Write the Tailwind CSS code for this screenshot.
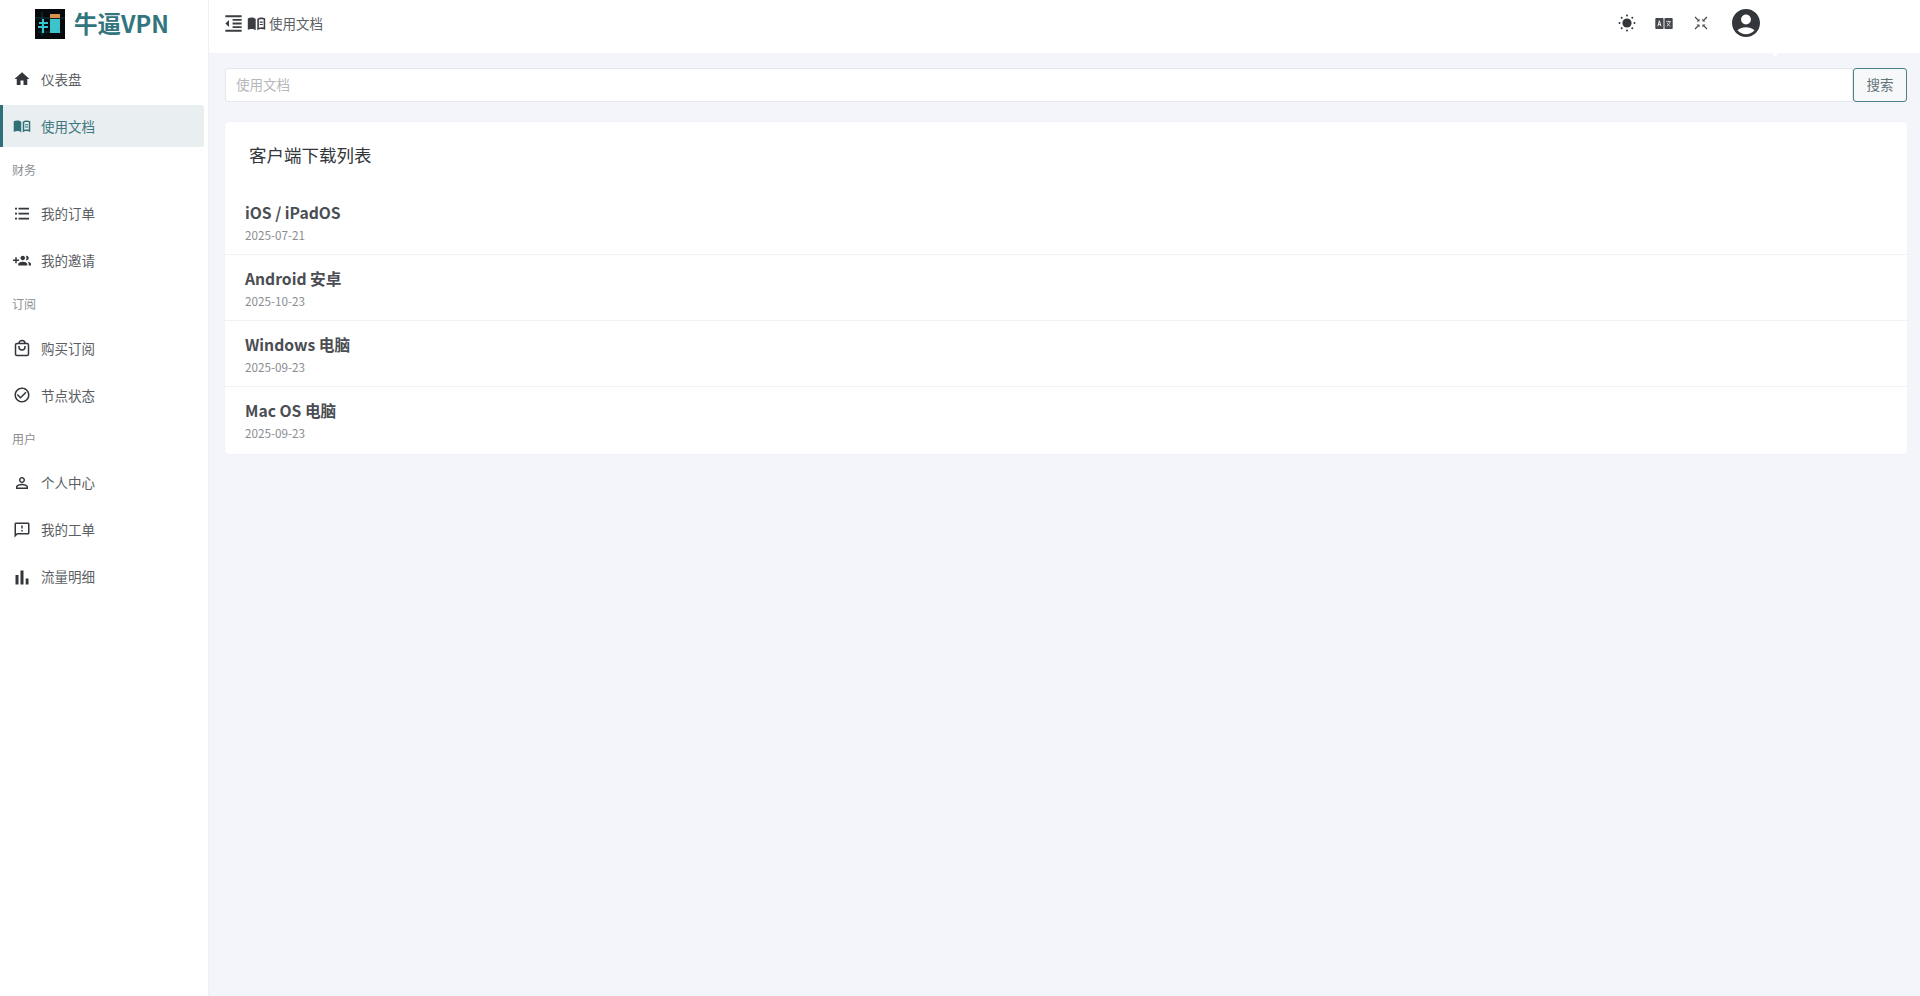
<!DOCTYPE html>
<html lang="zh-CN">
  <head>
    <meta charset="UTF-8" />
    <meta name="viewport" content="width=device-width, initial-scale=1.0" />
    <script src="https://cdn.jsdelivr.net/npm/@tailwindcss/browser@4"></script>
    <title>牛逼VPN</title>
  </head>
  <body class="bg-[#f4f5fa] font-['Noto_Sans_CJK_SC','Noto_Sans',sans-serif] text-[#3f4246]">
    <div class="flex h-[996px] overflow-hidden">
      <!-- sidebar -->
      <aside class="w-[209px] shrink-0 bg-white border-r border-[#eef0f5] flex flex-col">
        <div class="h-[47px] flex items-center pl-[35px] gap-[9px]">
          <svg class="w-[30px] h-[30px]" viewBox="0 0 30 30">
            <rect width="30" height="30" fill="#07090d" />
            <path d="M0 9h30M7 3v24M3 23h24" stroke="#155a66" stroke-width="0.6" />
            <rect x="15" y="10" width="10" height="14" fill="#3bc4cc" />
            <rect x="4" y="13" width="9" height="2" fill="#36c6d2" />
            <rect x="3" y="17" width="10" height="2" fill="#36c6d2" />
            <rect x="7" y="10" width="2" height="14" fill="#36c6d2" />
            <rect x="15" y="5" width="10" height="4" fill="#d98f4a" />
          </svg>
          <span class="text-[23.5px] leading-none font-bold text-[#33757f]">牛逼VPN</span>
        </div>
        <nav class="flex flex-col pt-[11px] text-[13.5px] text-[#5b5e63]">
          <a class="h-[42px] mb-[5px] flex items-center pl-[13px] mr-[4px]">
            <svg class="w-[18px] h-[18px] mr-[10px] fill-[#33363a]" viewBox="0 0 24 24"><path d="M10 20v-6h4v6h5v-8h3L12 3 2 12h3v8z" /></svg>
            仪表盘
          </a>
          <a class="h-[42px] flex items-center pl-[10px] mr-[4px] bg-[#e9eef0] border-l-[3px] border-[#2f6f78] rounded-r-[3px] text-[#3f7880]">
            <svg class="w-[18px] h-[18px] mr-[10px] fill-[#2f6f78]" viewBox="0 0 24 24"><path d="M11 6.200C9.600 5 7.600 4.500 5.500 4.500 3.900 4.500 2.400 4.900 1 5.800V20c1.400-.8 3-1.200 4.500-1.200 2 0 4 .5 5.500 1.700zM13 6.200c1.400-1.200 3.400-1.700 5.500-1.700 1.600 0 3.100.4 4.500 1.300V20c-1.400-.8-3-1.200-4.500-1.200-2 0-4 .5-5.500 1.700zm2 1v10.200c1-.5 2.300-.7 3.500-.7 1 0 1.900.1 2.500.3V7.100c-.8-.3-1.600-.5-2.500-.5-1.300 0-2.500.2-3.500.6zm1 2.300h4v1.500h-4zm0 3h4v1.500h-4z" /></svg>
            使用文档
          </a>
          <div class="h-[45.5px] flex items-center pl-[12px] text-[12px] text-[#8b8e92]">财务</div>
          <a class="h-[42px] mb-[5px] flex items-center pl-[13px] mr-[4px]">
            <svg class="w-[18px] h-[18px] mr-[10px] fill-[#33363a]" viewBox="0 0 18 18"><path d="M2 2.700h2v1.800H2zM2 7.700h2v1.800H2zM2 12.700h2v1.800H2zM5.500 2.700H16v1.800H5.500zM5.500 7.700H16v1.800H5.500zM5.500 12.700H16v1.800H5.500z" /></svg>
            我的订单
          </a>
          <a class="h-[42px] flex items-center pl-[13px] mr-[4px]">
            <svg class="w-[18px] h-[18px] mr-[10px] fill-[#33363a]" viewBox="0 0 24 24"><path d="M8 10H5V7H3v3H0v2h3v3h2v-3h3v-2zm10 1c1.660 0 2.990-1.340 2.990-3S19.660 5 18 5c-.32 0-.63.05-.91.14.57.81.9 1.790.9 2.860s-.34 2.040-.9 2.860c.28.09.59.14.91.14zm-5 0c1.660 0 2.990-1.340 2.990-3S14.660 5 13 5c-1.660 0-3 1.340-3 3s1.340 3 3 3zm6.620 2.160c.83.73 1.380 1.660 1.380 2.840v2h3v-2c0-1.540-2.370-2.490-4.380-2.840zM13 13c-2 0-6 1-6 3v2h12v-2c0-2-4-3-6-3z" /></svg>
            我的邀请
          </a>
          <div class="h-[45.5px] flex items-center pl-[12px] text-[12px] text-[#8b8e92]">订阅</div>
          <a class="h-[42px] mb-[5px] flex items-center pl-[13px] mr-[4px]">
            <svg class="w-[18px] h-[18px] mr-[10px] fill-none stroke-[#33363a] stroke-[1.500]" viewBox="0 0 18 18"><rect x="2.500" y="4.500" width="13" height="12" rx="1.500" /><path d="M6 4.500C6 2.700 7.300 1.500 9 1.500s3 1.200 3 3M6 7v1c0 1.700 1.300 3 3 3s3-1.300 3-3V7" /></svg>
            购买订阅
          </a>
          <a class="h-[42px] flex items-center pl-[13px] mr-[4px]">
            <svg class="w-[18px] h-[18px] mr-[10px] fill-[#33363a]" viewBox="0 0 24 24"><path d="M16.590 7.580L10 14.170l-3.590-3.580L5 12l5 5 8-8zM12 2C6.480 2 2 6.480 2 12s4.480 10 10 10 10-4.480 10-10S17.520 2 12 2zm0 18c-4.420 0-8-3.580-8-8s3.580-8 8-8 8 3.580 8 8-3.580 8-8 8z" /></svg>
            节点状态
          </a>
          <div class="h-[45.5px] flex items-center pl-[12px] text-[12px] text-[#8b8e92]">用户</div>
          <a class="h-[42px] mb-[5px] flex items-center pl-[13px] mr-[4px]">
            <svg class="w-[18px] h-[18px] mr-[10px] fill-[#33363a]" viewBox="0 0 24 24"><path d="M12 5.900c1.160 0 2.100.94 2.100 2.100s-.94 2.100-2.100 2.100S9.900 9.160 9.900 8s.94-2.100 2.100-2.100m0 9c2.970 0 6.100 1.460 6.100 2.100v1.100H5.900V17c0-.64 3.130-2.100 6.100-2.100M12 4C9.790 4 8 5.790 8 8s1.790 4 4 4 4-1.790 4-4-1.790-4-4-4zm0 9c-2.670 0-8 1.340-8 4v3h16v-3c0-2.660-5.330-4-8-4z" /></svg>
            个人中心
          </a>
          <a class="h-[42px] mb-[5px] flex items-center pl-[13px] mr-[4px]">
            <svg class="w-[18px] h-[18px] mr-[10px] fill-[#33363a]" viewBox="0 0 24 24"><path d="M20 2H4c-1.100 0-1.990.9-1.990 2L2 22l4-4h14c1.100 0 2-.9 2-2V4c0-1.100-.9-2-2-2zm0 14H5.170L4 17.170V4h16v12zm-9-4h2v2h-2zm0-6h2v4h-2z" /></svg>
            我的工单
          </a>
          <a class="h-[42px] flex items-center pl-[13px] mr-[4px]">
            <svg class="w-[18px] h-[18px] mr-[10px] fill-[#33363a]" viewBox="0 0 18 18"><path d="M2.500 7h3v9.500h-3zM7.500 2.500h3v14h-3zM12.700 10.500h2.800v6h-2.800z" /></svg>
            流量明细
          </a>
        </nav>
      </aside>

      <div class="flex-1 min-w-0 flex flex-col">
        <!-- top bar -->
        <header class="relative h-[53px] shrink-0 bg-white flex items-center pl-[15px] pr-[160px] pb-[7px]">
          <svg class="w-[19px] h-[19px] mr-[4px] fill-[#3a3d41]" viewBox="1.500 1.500 21 21"><path d="M11 17h10v-2H11v2zm-8-5l4 4V8l-4 4zm0 9h18v-2H3v2zM3 3v2h18V3H3zm8 6h10V7H11v2zm0 4h10v-2H11v2z" /></svg>
          <svg class="w-[19px] h-[19px] mr-[3px] fill-[#3a3d41]" viewBox="0 0 24 24"><path d="M11 6.200C9.600 5 7.600 4.500 5.500 4.500 3.900 4.500 2.400 4.900 1 5.800V20c1.400-.8 3-1.200 4.500-1.200 2 0 4 .5 5.500 1.700zM13 6.200c1.400-1.200 3.400-1.700 5.500-1.700 1.600 0 3.100.4 4.500 1.300V20c-1.400-.8-3-1.200-4.500-1.200-2 0-4 .5-5.500 1.700zm2 1v10.200c1-.5 2.300-.7 3.500-.7 1 0 1.900.1 2.500.3V7.100c-.8-.3-1.600-.5-2.500-.5-1.300 0-2.500.2-3.500.6zm1 2.300h4v1.500h-4zm0 3h4v1.500h-4z" /></svg>
          <span class="text-[13.5px] text-[#5b5e63]">使用文档</span>
          <div class="ml-auto flex items-center">
            <svg class="w-[20px] h-[20px] mr-[18px] fill-[#33363a]" viewBox="0 0 20 20">
              <circle cx="10" cy="10" r="4.600" />
              <circle cx="10" cy="2.500" r="1" /><circle cx="10" cy="17.500" r="1" />
              <circle cx="2.500" cy="10" r="1" /><circle cx="17.500" cy="10" r="1" />
              <circle cx="4.700" cy="4.700" r="1" /><circle cx="15.300" cy="4.700" r="1" />
              <circle cx="4.700" cy="15.300" r="1" /><circle cx="15.300" cy="15.300" r="1" />
            </svg>
            <svg class="w-[18px] h-[11px] mr-[21px]" viewBox="0 0 19 12">
              <rect width="9" height="12" rx="1" fill="#44474b" />
              <rect x="10" width="9" height="12" rx="1" fill="#44474b" />
              <path d="M2.800 9L4.500 3l1.700 6M3.500 7h2" stroke="#fff" stroke-width="1" fill="none" />
              <path d="M12 4h5M14.500 3v1.500M16 4.500c-.6 2-1.800 3.500-3.500 4.500M13 5.500c.6 1.500 1.800 2.800 3.500 3.500" stroke="#fff" stroke-width=".8" fill="none" />
            </svg>
            <svg class="w-[14px] h-[14px] mr-[24px] fill-[#44474b] stroke-[#44474b]" viewBox="0 0 14 14">
              <path d="M1 1l3 3M13 1l-3 3M1 13l3-3M13 13l-3-3" stroke-width="1.100" fill="none" />
              <path d="M5.500 5.500V2.500L2.500 5.500zM8.500 5.500V2.500L11.500 5.500zM5.500 8.500V11.500L2.500 8.500zM8.500 8.500V11.500L11.500 8.500z" stroke="none" />
            </svg>
            <svg class="w-[28px] h-[28px] fill-[#33363a]" viewBox="2 2 20 20"><path d="M12 2C6.480 2 2 6.480 2 12s4.480 10 10 10 10-4.480 10-10S17.520 2 12 2zm0 4c1.930 0 3.500 1.570 3.500 3.500S13.930 13 12 13s-3.500-1.570-3.500-3.500S10.070 6 12 6zm0 14c-2.030 0-4.430-.82-6.140-2.880C7.550 15.800 9.680 15 12 15s4.450.8 6.140 2.120C16.430 19.180 14.030 20 12 20z" /></svg>
          </div>
          <div class="absolute left-[1562px] top-[52px] w-0 h-0 border-x-[4px] border-x-transparent border-t-[5px] border-t-white"></div>
        </header>

        <main class="pl-[16px] pt-[15px] pr-[13px]">
          <div class="flex h-[34px]">
            <input
              class="flex-1 min-w-0 h-full bg-white border border-[#e4e7ec] rounded-l-[3px] px-[10px] pb-[2px] text-[13.5px] outline-none placeholder:text-[#b5b7ba]"
              placeholder="使用文档"
            />
            <button class="w-[54px] h-full pb-[2px] bg-[#f6f8fa] border border-[#4f8088] rounded-[3px] text-[13.5px] text-[#5f7276]">搜索</button>
          </div>

          <section class="mt-[20px] bg-white rounded-[4px] shadow-[0_0_1px_rgba(0,0,0,0.08)]">
            <h2 class="h-[67px] pl-[24px] pt-[20px] text-[17.5px] leading-[26px] font-normal text-[#33363a]">客户端下载列表</h2>
            <ul>
              <li class="h-[66px] pl-[20px] pt-[12px] border-b border-[#eff1f4]">
                <div class="text-[15.7px] leading-[24px] font-bold text-[#4a4d52]">iOS / iPadOS</div>
                <div class="text-[11.7px] leading-[18px] mt-[1px] text-[#8a8d91]">2025-07-21</div>
              </li>
              <li class="h-[66px] pl-[20px] pt-[12px] border-b border-[#eff1f4]">
                <div class="text-[15.7px] leading-[24px] font-bold text-[#4a4d52]">Android 安卓</div>
                <div class="text-[11.7px] leading-[18px] mt-[1px] text-[#8a8d91]">2025-10-23</div>
              </li>
              <li class="h-[66px] pl-[20px] pt-[12px] border-b border-[#eff1f4]">
                <div class="text-[15.7px] leading-[24px] font-bold text-[#4a4d52]">Windows 电脑</div>
                <div class="text-[11.7px] leading-[18px] mt-[1px] text-[#8a8d91]">2025-09-23</div>
              </li>
              <li class="h-[67px] pl-[20px] pt-[12px]">
                <div class="text-[15.7px] leading-[24px] font-bold text-[#4a4d52]">Mac OS 电脑</div>
                <div class="text-[11.7px] leading-[18px] mt-[1px] text-[#8a8d91]">2025-09-23</div>
              </li>
            </ul>
          </section>
        </main>
      </div>
    </div>
  </body>
</html>
